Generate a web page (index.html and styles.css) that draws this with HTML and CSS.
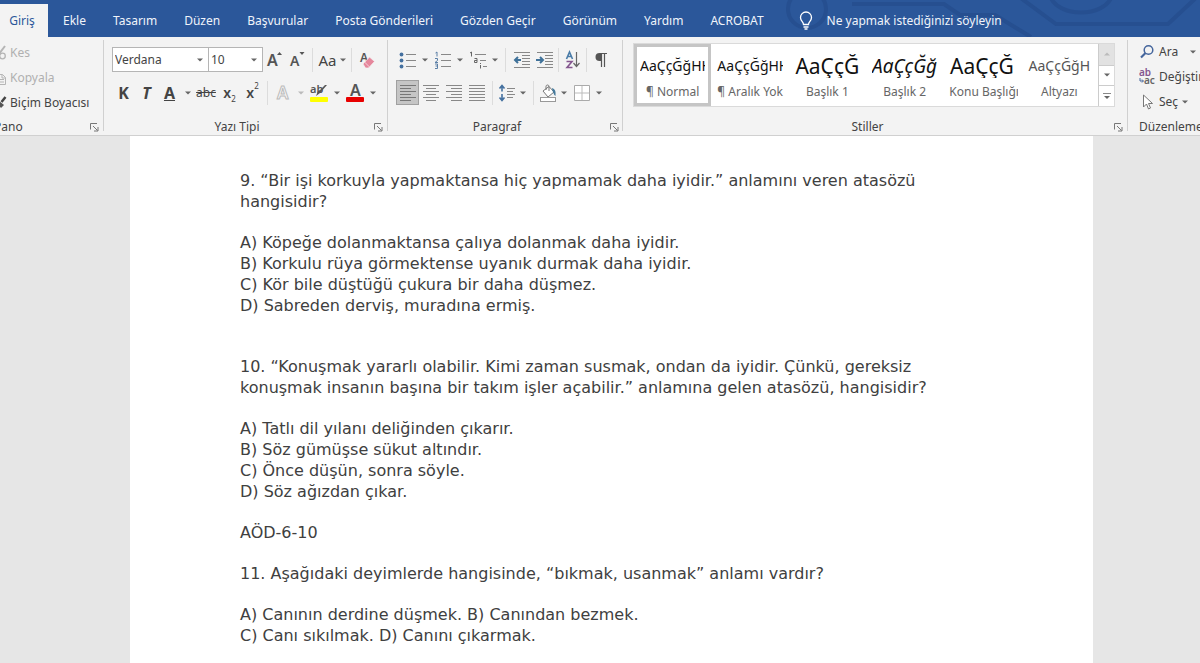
FILE: index.html
```html
<!DOCTYPE html>
<html lang="tr">
<head>
<meta charset="utf-8">
<title>AÖD-6-10</title>
<link rel="stylesheet" href="styles.css">
</head>
<body>
<svg class="defs" aria-hidden="true">
  <symbol id="caret" viewBox="0 0 6 4"><path d="M0 0.500h6L3 3.500z" fill="#666"/></symbol>
  <symbol id="launch" viewBox="0 0 9 9"><path d="M.5 6.500V.5H7M3 3l4.500 4.500M8 4v4H4" fill="none" stroke="#777"/></symbol>
</svg>

<header class="tabbar">
  <svg class="circuit" viewBox="0 0 420 37" aria-hidden="true">
    <g fill="none" stroke="#264f90" stroke-width="4">
      <circle cx="27" cy="9" r="19"/>
      <path d="M72 4h92l16 11h35l36 22"/>
      <path d="M238-4l38 28h112l30-28"/>
      <path d="M270-4c8 22 54 22 62 0"/>
    </g>
  </svg>
  <nav class="tabs">
    <button class="tab active">Giriş</button>
    <button class="tab">Ekle</button>
    <button class="tab">Tasarım</button>
    <button class="tab">Düzen</button>
    <button class="tab">Başvurular</button>
    <button class="tab">Posta Gönderileri</button>
    <button class="tab">Gözden Geçir</button>
    <button class="tab">Görünüm</button>
    <button class="tab">Yardım</button>
    <button class="tab">ACROBAT</button>
    <button class="tab tell">
      <svg width="14" height="19" viewBox="0 0 14 19"><path d="M4.500 13.500C4.500 10.500 1.500 10 1.500 6.500a5.500 5.500 0 0 1 11 0c0 3.500-3 4-3 7zM4.500 16h5M5.500 18h3" fill="none" stroke="#fff" stroke-width="1.300"/></svg>
      <span>Ne yapmak istediğinizi söyleyin</span>
    </button>
  </nav>
</header>

<section class="ribbon">
  <div class="group clipboard">
    <div class="stack">
      <button class="cmd off"><svg width="14" height="14" viewBox="0 0 14 14"><path d="M13 0L7 8" stroke="#b5b5b5" stroke-width="2"/><circle cx="10.500" cy="10" r="2.800" fill="none" stroke="#b5b5b5" stroke-width="1.300"/></svg>Kes</button>
      <button class="cmd off"><svg width="14" height="14" viewBox="0 0 14 14"><path d="M5.500 3.500h5l3 3v7h-8zM10 3.500v3.500h3.500M7 8.500h5M7 11h5" fill="none" stroke="#b5b5b5"/></svg>Kopyala</button>
      <button class="cmd"><svg width="14" height="14" viewBox="0 0 14 14"><path d="M13.500 1l-4 5" stroke="#444" stroke-width="2.500"/><path d="M6 4l6 5-3 3-4-5z" fill="#555"/></svg>Biçim Boyacısı</button>
    </div>
    <footer class="foot"><span>Pano</span><button class="launch" aria-label="Pano seçenekleri"><svg width="9" height="9"><use href="#launch"/></svg></button></footer>
  </div>

  <div class="group font">
    <div class="row">
      <label class="combo family"><select aria-label="Yazı tipi"><option>Verdana</option></select><svg width="6" height="4"><use href="#caret"/></svg></label>
      <label class="combo size"><select aria-label="Yazı boyutu"><option>10</option></select><svg width="6" height="4"><use href="#caret"/></svg></label>
      <button class="tool" aria-label="Büyüt"><svg width="16" height="18" viewBox="0 0 16 18"><text x="0" y="15" font-size="16" class="g semi">A</text><path d="M10 4l2.500-3 2.500 3z" fill="#555"/></svg></button>
      <button class="tool" aria-label="Küçült"><svg width="16" height="18" viewBox="0 0 16 18"><text x="0" y="15" font-size="14" class="g semi">A</text><path d="M9.500 1h5L12 4z" fill="#555"/></svg></button>
      <i class="sep"></i>
      <button class="tool case">Aa<svg width="6" height="4"><use href="#caret"/></svg></button>
      <i class="sep"></i>
      <button class="tool" aria-label="Biçimlendirmeyi temizle"><svg width="16" height="18" viewBox="0 0 16 18"><text x="1" y="11" font-size="12" class="g semi">A</text><path d="M4 13l6.500-7 5 4.500-6 6.500H6.500z" fill="#e5879c" stroke="#f3f3f3" stroke-width=".7"/><path d="M5.500 11l5 5" stroke="#f6cfd7"/></svg></button>
    </div>
    <div class="row">
      <button class="tool bold">K</button>
      <button class="tool ital">T</button>
      <button class="tool under">A</button>
      <button class="caret" aria-label="Alt çizgi"><svg width="6" height="4"><use href="#caret"/></svg></button>
      <button class="tool strike">abc</button>
      <button class="tool script">x<sub>2</sub></button>
      <button class="tool script">x<sup>2</sup></button>
      <i class="sep"></i>
      <button class="tool" aria-label="Metin efektleri"><svg width="16" height="18" viewBox="0 0 16 18"><text x="2" y="15" font-size="17" class="outline">A</text></svg></button>
      <button class="caret pale" aria-label="Efekt seç"><svg width="6" height="4"><use href="#caret"/></svg></button>
      <button class="tool" aria-label="Vurgu rengi"><svg width="20" height="20" viewBox="0 0 20 20"><text x="1" y="10" font-size="11" class="g semi">ab</text><path d="M18 2l-7 8-4 3 2-5 2-1 5-5z" fill="#555"/><rect x="1" y="14" width="18" height="5" rx="1" fill="#ff0"/></svg></button>
      <button class="caret" aria-label="Vurgu seç"><svg width="6" height="4"><use href="#caret"/></svg></button>
      <button class="tool" aria-label="Yazı rengi"><svg width="20" height="20" viewBox="0 0 20 20"><text x="5" y="13" font-size="16" class="g semi">A</text><rect x="1" y="14" width="18" height="5" rx="1" fill="#e80000"/></svg></button>
      <button class="caret" aria-label="Renk seç"><svg width="6" height="4"><use href="#caret"/></svg></button>
    </div>
    <footer class="foot"><span>Yazı Tipi</span><button class="launch" aria-label="Yazı tipi seçenekleri"><svg width="9" height="9"><use href="#launch"/></svg></button></footer>
  </div>

  <div class="group para">
    <div class="row">
      <button class="tool" aria-label="Madde işaretleri"><svg width="18" height="18" viewBox="0 0 18 18"><path d="M7 3.500h10M7 9.500h10M7 15.500h10" stroke="#888"/><g fill="#44709f"><circle cx="2.500" cy="3.500" r="1.900"/><circle cx="2.500" cy="9.500" r="1.900"/><circle cx="2.500" cy="15.500" r="1.900"/></g></svg></button>
      <button class="caret" aria-label="Madde seç"><svg width="6" height="4"><use href="#caret"/></svg></button>
      <button class="tool" aria-label="Numaralandırma"><svg width="18" height="18" viewBox="0 0 18 18"><path d="M7 3.500h10M7 9.500h10M7 15.500h10" stroke="#888"/><path d="M1.500 2l1.500-1v4.500M1 7.500h2.500v2L1 11.500h3M1 13h2.500v4.500H1M1.500 15h2" fill="none" stroke="#5b7fa6"/></svg></button>
      <button class="caret" aria-label="Numara seç"><svg width="6" height="4"><use href="#caret"/></svg></button>
      <button class="tool" aria-label="Çok düzeyli liste"><svg width="18" height="18" viewBox="0 0 18 18"><path d="M6 3.500h11M11 9.500h6M14 15.500h4" stroke="#888"/><path d="M1 2l1.500-1v4.500M5.500 7.500h2.500v4H5.500v-2H8M11.500 14v3.500M11.500 12v1" fill="none" stroke="#666"/></svg></button>
      <button class="caret" aria-label="Liste seç"><svg width="6" height="4"><use href="#caret"/></svg></button>
      <i class="sep"></i>
      <button class="tool" aria-label="Girintiyi azalt"><svg width="18" height="18" viewBox="0 0 18 18"><path d="M1 1.500h16M9 4.500h8M9 7.500h8M9 10.500h8M9 13.500h8M1 16.500h16" stroke="#888"/><path d="M8 9H2M5 6L2 9l3 3" fill="none" stroke="#3f7199" stroke-width="2"/></svg></button>
      <button class="tool" aria-label="Girintiyi artır"><svg width="18" height="18" viewBox="0 0 18 18"><path d="M1 1.500h16M9 4.500h8M9 7.500h8M9 10.500h8M9 13.500h8M1 16.500h16" stroke="#888"/><path d="M0 9h7M4 6l3 3-3 3" fill="none" stroke="#3f7199" stroke-width="2"/></svg></button>
      <i class="sep thin"></i>
      <button class="tool" aria-label="Sırala"><svg width="16" height="18" viewBox="0 0 16 18"><path d="M1.500 8L4.500 1l3 7M2.500 5.500h4" fill="none" stroke="#4a7ca8" stroke-width="1.600"/><path d="M1.500 10.500h5.500l-5 6h5.500" fill="none" stroke="#84568f" stroke-width="1.600"/><path d="M11.500 1v14M8.500 12l3 3.500 3-3.500" fill="none" stroke="#666" stroke-width="1.200"/></svg></button>
      <i class="sep thin"></i>
      <button class="tool" aria-label="Paragraf işaretleri"><svg width="14" height="18" viewBox="0 0 14 18"><path d="M7 2H5.500a4 4 0 0 0 0 8H7z" fill="#555"/><path d="M6 2.500h7M7.500 2v14M10.500 2v14" stroke="#555" stroke-width="1.200"/></svg></button>
    </div>
    <div class="row">
      <button class="tool pressed" aria-label="Sola hizala"><svg width="16" height="18" viewBox="0 0 16 18"><path d="M0 1.500h16M0 4.500h11M0 7.500h16M0 10.500h11M0 13.500h16M0 16.500h11" stroke="#777"/></svg></button>
      <button class="tool" aria-label="Ortala"><svg width="16" height="18" viewBox="0 0 16 18"><path d="M0 1.500h16M3 4.500h10M0 7.500h16M3 10.500h10M0 13.500h16M3 16.500h10" stroke="#888"/></svg></button>
      <button class="tool" aria-label="Sağa hizala"><svg width="16" height="18" viewBox="0 0 16 18"><path d="M0 1.500h16M5 4.500h11M0 7.500h16M5 10.500h11M0 13.500h16M5 16.500h11" stroke="#888"/></svg></button>
      <button class="tool" aria-label="İki yana yasla"><svg width="16" height="18" viewBox="0 0 16 18"><path d="M0 1.500h16M0 4.500h16M0 7.500h16M0 10.500h16M0 13.500h16M0 16.500h16" stroke="#888"/></svg></button>
      <i class="sep"></i>
      <button class="tool small" aria-label="Satır aralığı"><svg width="18" height="18" viewBox="0 0 18 18"><path d="M4 2v5.500M1.500 4.500L4 1.500l2.500 3M4 10v6M1.500 13.500L4 16.500l2.500-3" fill="none" stroke="#44709f" stroke-width="1.600"/><path d="M9 4.500h8M9 7.500h6M9 10.500h8M9 13.500h6" stroke="#888"/></svg></button>
      <button class="caret" aria-label="Aralık seç"><svg width="6" height="4"><use href="#caret"/></svg></button>
      <i class="sep"></i>
      <button class="tool small" aria-label="Gölgelendirme"><svg width="18" height="18" viewBox="0 0 18 18"><path d="M4 7l6-4.500 5 5.500-6 5z" fill="#fff" stroke="#777"/><path d="M7 6V2.500c0-2 3-2 3 0V7" fill="none" stroke="#777"/><path d="M13 4c3 1 4 3 3.500 8-2-1-2-4-3-5z" fill="#44799b"/><rect x="1.500" y="13.500" width="15" height="4" fill="#fff" stroke="#999"/></svg></button>
      <button class="caret" aria-label="Gölge seç"><svg width="6" height="4"><use href="#caret"/></svg></button>
      <button class="tool" aria-label="Kenarlıklar"><svg width="16" height="16" viewBox="0 0 16 16"><path d="M.5.500h15v15H.5z" fill="#fff" stroke="#aaa"/><path d="M8 1v14M1 8h14" stroke="#bbb"/></svg></button>
      <button class="caret" aria-label="Kenarlık seç"><svg width="6" height="4"><use href="#caret"/></svg></button>
    </div>
    <footer class="foot"><span>Paragraf</span><button class="launch" aria-label="Paragraf seçenekleri"><svg width="9" height="9"><use href="#launch"/></svg></button></footer>
  </div>

  <div class="group styles">
    <div class="gallery">
      <div class="cards">
        <button class="card chosen"><span class="sample">AaÇçĞğHH</span><span class="name">¶ Normal</span></button>
        <button class="card"><span class="sample">AaÇçĞğHH</span><span class="name">¶ Aralık Yok</span></button>
        <button class="card"><span class="sample big">AaÇçĞ</span><span class="name">Başlık 1</span></button>
        <button class="card"><span class="sample mid">AaÇçĞğ</span><span class="name">Başlık 2</span></button>
        <button class="card"><span class="sample big">AaÇçĞ</span><span class="name">Konu Başlığı</span></button>
        <button class="card"><span class="sample light">AaÇçĞğH</span><span class="name">Altyazı</span></button>
      </div>
      <div class="scroller">
        <button class="up" aria-label="Yukarı"><svg width="6" height="4" viewBox="0 0 6 4"><path d="M0 3.500h6L3 .5z" fill="#bbb"/></svg></button>
        <button aria-label="Aşağı"><svg width="6" height="4"><use href="#caret"/></svg></button>
        <button aria-label="Diğer"><svg width="8" height="7" viewBox="0 0 8 7"><path d="M0 .5h8" stroke="#888"/><path d="M1 3h6L4 6z" fill="#666"/></svg></button>
      </div>
    </div>
    <footer class="foot"><span>Stiller</span><button class="launch" aria-label="Stil seçenekleri"><svg width="9" height="9"><use href="#launch"/></svg></button></footer>
  </div>

  <div class="group edit">
    <div class="stack">
      <button class="cmd find"><svg width="16" height="16" viewBox="0 0 16 16"><circle cx="9.500" cy="6" r="4.300" fill="none" stroke="#44659c" stroke-width="1.500"/><path d="M6.500 9L2 13.500" stroke="#44659c" stroke-width="2.200"/></svg>Ara<svg class="gap" width="6" height="4"><use href="#caret"/></svg></button>
      <button class="cmd"><svg width="16" height="16" viewBox="0 0 16 16"><g font-size="10" font-weight="600"><text x="0" y="7" fill="#84568f">ab</text><text x="5" y="15" fill="#666">ac</text></g><path d="M1 9v3h3M3 10.500L4.500 12 3 13.500" fill="none" stroke="#44659c"/></svg>Değiştir</button>
      <button class="cmd"><svg width="16" height="16" viewBox="0 0 16 16"><path d="M4.500 1v12l3-3 2 5 2-1-2-4.500h4z" fill="#fff" stroke="#777"/></svg>Seç<svg width="6" height="4"><use href="#caret"/></svg></button>
    </div>
    <footer class="foot"><span>Düzenleme</span></footer>
  </div>
</section>

<main class="desk">
  <article class="page">
    <p>9. “Bir işi korkuyla yapmaktansa hiç yapmamak daha iyidir.” anlamını veren atasözü hangisidir?</p>
    <p>A) Köpeğe dolanmaktansa çalıya dolanmak daha iyidir.<br>B) Korkulu rüya görmektense uyanık durmak daha iyidir.<br>C) Kör bile düştüğü çukura bir daha düşmez.<br>D) Sabreden derviş, muradına ermiş.</p>
    <p class="next">10. “Konuşmak yararlı olabilir. Kimi zaman susmak, ondan da iyidir. Çünkü, gereksiz konuşmak insanın başına bir takım işler açabilir.” anlamına gelen atasözü, hangisidir?</p>
    <p>A) Tatlı dil yılanı deliğinden çıkarır.<br>B) Söz gümüşse sükut altındır.<br>C) Önce düşün, sonra söyle.<br>D) Söz ağızdan çıkar.</p>
    <p>AÖD-6-10</p>
    <p>11. Aşağıdaki deyimlerde hangisinde, “bıkmak, usanmak” anlamı vardır?</p>
    <p>A) Canının derdine düşmek. B) Canından bezmek.<br>C) Canı sıkılmak. D) Canını çıkarmak.</p>
  </article>
</main>
</body>
</html>
```

FILE: styles.css
```css
* { box-sizing: border-box; }
body {
  margin: 0;
  min-height: 100vh;
  display: flex;
  flex-direction: column;
  overflow: hidden;
  background: #e6e6e6;
  color: #444;
  font: 12px/16px "Noto Sans", "Open Sans", sans-serif;
}
button, select { margin: 0; padding: 0; border: 0; background: none; color: inherit; font: inherit; }
svg { flex: none; overflow: visible; }
.defs { position: absolute; width: 0; height: 0; }

.tabbar { position: relative; flex: none; height: 37px; background: #2b579a; overflow: hidden; }
.circuit { position: absolute; right: 0; top: 0; width: 420px; height: 37px; }
.tabs { position: relative; display: flex; gap: 27px; height: 100%; padding-top: 4px; }
.tab { color: #f0f4fa; white-space: nowrap; }
.tab.active { width: 48px; margin-right: -12px; padding-right: 4px; background: #f3f3f3; color: #2b579a; }
.tell { display: flex; align-items: center; gap: 14px; margin-left: 8px; }

.ribbon { display: flex; flex: none; height: 99px; padding-top: 3px; background: #f3f3f3; border-bottom: 1px solid #d0d0d0; }
.group { display: flex; flex: none; flex-direction: column; border-right: 1px solid #d0d0d0; margin-bottom: 4px; }
.foot { display: flex; align-items: center; height: 16px; margin-top: auto; margin-bottom: -4px; padding-right: 4px; }
.foot span { flex: 1; padding-right: 12px; text-align: center; white-space: nowrap; }
.launch { display: flex; }
.stack { display: flex; flex-direction: column; gap: 9px; padding-top: 5px; }
.cmd { display: flex; align-items: center; gap: 4px; height: 16px; white-space: nowrap; }
.off { color: #b0b0b0; }

.clipboard { width: 104px; }
.clipboard .stack { margin-left: -8px; }
.clipboard .foot span { text-align: left; margin-left: -6px; }

.row { display: flex; align-items: center; height: 25px; }
.row + .row { margin-top: 8px; }
.tool { display: flex; flex: none; align-items: center; justify-content: center; width: 23px; height: 25px; }
.tool.small { width: 20px; }
.caret { display: flex; flex: none; align-items: center; justify-content: center; width: 13px; height: 25px; }
.pale { opacity: .4; }
.sep { flex: none; width: 1px; height: 24px; margin: 0 4px; background: #dcdcdc; }
.sep.thin { margin: 0 2px; }
.pressed { background: #c5c5c5; border: 1px solid #a0a0a0; }
.g { fill: #555; }
.semi { font-weight: 600; }
.outline { fill: #f8f8f8; stroke: #bbb; font-weight: 600; }

.font { width: 284px; padding: 7px 0 0 8px; }
.font .sep { margin: 0 3px; }
.combo { position: relative; display: flex; height: 25px; background: #fff; border: 1px solid #b5b5b5; }
.combo select { appearance: none; width: 100%; padding-left: 2px; }
.combo svg { position: absolute; right: 5px; top: 10px; pointer-events: none; }
.family { width: 97px; }
.size { width: 54px; border-left: 0; }
.case { width: 32px; gap: 3px; font-size: 15px; }
.bold, .ital, .under { font-size: 16px; font-weight: 700; }
.ital { font-style: italic; }
.under { text-decoration: underline; }
.tool.strike { width: 24px; text-decoration: line-through; }
.script { font-size: 14px; font-weight: 600; }
.script sub, .script sup { font-size: 8px; font-weight: 400; line-height: 8px; }
.script sub { align-self: flex-end; margin-bottom: 2px; }
.script sup { align-self: flex-start; margin-top: 2px; }

.para { width: 235px; padding: 7px 0 0 8px; }
.para .foot { padding-right: 3px; }
.para .caret { width: 12px; }

.styles { flex: 1; min-width: 0; padding: 3px 0 0 10px; }
.gallery { display: flex; height: 64px; margin-right: 12px; background: #fff; border: 1px solid #dadada; }
.cards { display: grid; flex: 1; grid-template-columns: repeat(6, 1fr); min-width: 0; }
.card { display: flex; flex-direction: column; min-width: 0; padding: 7px 3px 0; border: 3px solid transparent; overflow: hidden; }
.chosen { border-color: #c5c5c5; }
.sample { width: 100%; height: 24px; overflow: hidden; color: #111; font-size: 14px; line-height: 24px; white-space: nowrap; text-align: left; }
.sample.big { font-size: 21px; text-align: center; }
.sample.mid { font-size: 19px; font-style: italic; }
.sample.light { color: #555; text-align: center; }
.name { width: 100%; margin-top: 6px; color: #666; text-align: center; white-space: nowrap; }
.scroller { display: grid; flex: none; grid-template-rows: repeat(3, 1fr); width: 16px; border-left: 1px solid #ccc; }
.scroller button { display: flex; align-items: center; justify-content: center; border-top: 1px solid #ccc; }
.scroller .up { border-top: 0; background: #e2e2e2; }

.edit { width: 72px; padding-left: 11px; border-right: 0; }
.edit .stack { padding-top: 4px; overflow: hidden; }
.edit .foot { padding-right: 0; }
.edit .foot span { padding-right: 0; text-align: left; }
.find .gap { margin-left: 8px; }

.desk { flex: 1; padding: 0 107px 0 130px; display: flex; }
.page {
  flex: 1;
  padding: 34px 148px 0 110px;
  background: #fff;
  color: #404040;
  font: 16px/21px "DejaVu Sans", Verdana, sans-serif;
}
.page p { margin: 0 0 20px; }
.page .next { margin-top: 40px; }
.page p:last-child { margin-bottom: 0; }
```
